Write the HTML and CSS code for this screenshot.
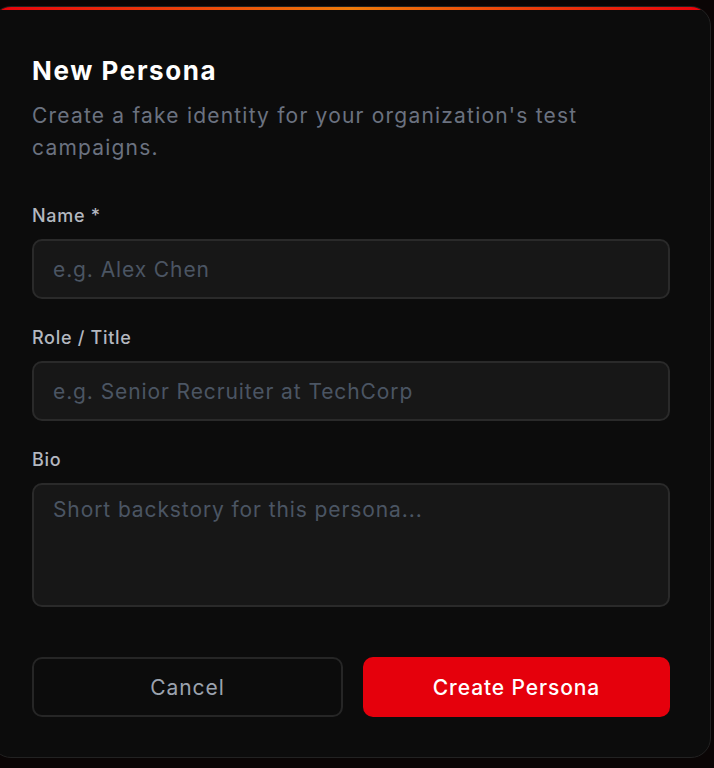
FILE: index.html
```html
<!DOCTYPE html>
<html lang="en">
<head>
  <meta charset="UTF-8">
  <title>New Persona</title>
  <link rel="stylesheet" href="styles.css">
</head>
<body>
  <div class="modal">
    <div class="accent"></div>
    <h2 class="title">New Persona</h2>
    <p class="subtitle">Create a fake identity for your organization's test campaigns.</p>

    <div class="field">
      <label>Name *</label>
      <input type="text" placeholder="e.g. Alex Chen">
    </div>
    <div class="field">
      <label>Role / Title</label>
      <input type="text" placeholder="e.g. Senior Recruiter at TechCorp">
    </div>
    <div class="field">
      <label>Bio</label>
      <textarea placeholder="Short backstory for this persona..."></textarea>
    </div>

    <div class="actions">
      <button class="btn btn-cancel">Cancel</button>
      <button class="btn btn-primary">Create Persona</button>
    </div>
  </div>
</body>
</html>
```

FILE: styles.css
```css
body {
  margin: 0;
  background: #0a0505;
  font-family: "Inter", "Noto Sans", sans-serif;
  overflow: hidden;
}
.modal {
  position: relative;
  box-sizing: border-box;
  width: 720px;
  margin: 6px 0 0 -9px;
  padding: 47px 40px 40px;
  background: #0c0c0c;
  border: 1px solid #222;
  border-radius: 20px;
  overflow: hidden;
}
.accent {
  position: absolute;
  top: 0;
  left: 0;
  right: 0;
  height: 3px;
  background: linear-gradient(90deg, #e8000b, #f07a0a 50%, #e8000b);
}
.title {
  margin: 0;
  font-size: 26px;
  line-height: 34px;
  font-weight: 700;
  letter-spacing: 1.6px;
  color: #fff;
}
.subtitle {
  margin: 12px 0 40px;
  font-size: 21px;
  line-height: 32px;
  letter-spacing: 1.2px;
  color: #6b7280;
}
.field {
  display: flex;
  flex-direction: column;
  gap: 11px;
  margin-bottom: 27px;
}
.field label {
  font-size: 18px;
  line-height: 24px;
  font-weight: 500;
  letter-spacing: 0.7px;
  color: #b4b8c0;
}
.field input,
.field textarea {
  box-sizing: border-box;
  width: 100%;
  background: #171717;
  border: 2px solid #2a2a2a;
  border-radius: 10px;
  color: #ddd;
  font-family: inherit;
  font-size: 21px;
  letter-spacing: 0.9px;
  padding: 0 19px;
  outline: none;
}
.field input {
  height: 60px;
}
.field textarea {
  height: 124px;
  padding-top: 12px;
  resize: none;
}
.field input::placeholder,
.field textarea::placeholder {
  color: #4b5563;
}
.actions {
  display: flex;
  gap: 20px;
  margin-top: 50px;
}
.btn {
  flex: 1;
  height: 60px;
  border-radius: 10px;
  font-family: inherit;
  font-size: 21px;
  letter-spacing: 0.9px;
  cursor: pointer;
}
.btn-cancel {
  background: transparent;
  border: 2px solid #262626;
  color: #9ca3af;
  font-weight: 400;
}
.btn-primary {
  background: #e5000c;
  border: none;
  color: #fff;
  font-weight: 500;
}
```
